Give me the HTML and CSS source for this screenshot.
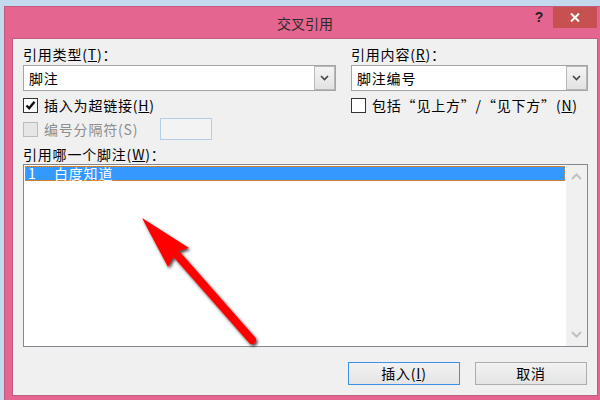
FILE: index.html
```html
<!doctype html>
<html lang="zh-CN">
<head>
    <meta charset="utf-8">
    <title>交叉引用</title>
    <link rel="stylesheet" href="styles.css">
</head>
<body>
    <div class="window">
        <div class="titlebar">
            <div></div>
            <div class="title">交叉引用</div>
            <div class="controls">
                <span class="help">?</span>
                <span class="close">
                    <svg width="10" height="9" viewBox="0 0 10 9"><path d="M1 0.5 L9 8.5 M9 0.5 L1 8.5" stroke="#fff" stroke-width="2"/></svg>
                </span>
            </div>
        </div>

        <div class="content">
            <div class="fields">
                <div class="label">引用类型(<u>T</u>)：</div>
                <div class="label">引用内容(<u>R</u>)：</div>

                <div class="select">
                    <div class="select-value">脚注</div>
                    <div class="select-btn">
                        <svg width="9" height="6" viewBox="0 0 9 6"><path d="M1 1 L4.5 4.5 L8 1" fill="none" stroke="#444" stroke-width="1.6"/></svg>
                    </div>
                </div>
                <div class="select">
                    <div class="select-value">脚注编号</div>
                    <div class="select-btn">
                        <svg width="9" height="6" viewBox="0 0 9 6"><path d="M1 1 L4.5 4.5 L8 1" fill="none" stroke="#444" stroke-width="1.6"/></svg>
                    </div>
                </div>

                <div class="check-row">
                    <span class="box">
                        <svg width="13" height="13" viewBox="0 0 13 13"><path d="M2.5 6.5 L5.2 9.3 L10.5 2.8" fill="none" stroke="#111" stroke-width="2.4"/></svg>
                    </span>
                    <span>插入为超链接(<u>H</u>)</span>
                </div>
                <div class="check-row">
                    <span class="box"></span>
                    <span>包括“见上方”/“见下方”(<u>N</u>)</span>
                </div>

                <div class="check-row disabled">
                    <span class="box"></span>
                    <span>编号分隔符(S)</span>
                    <span class="sep-input"></span>
                </div>
            </div>

            <div class="label list-label">引用哪一个脚注(<u>W</u>)：</div>

            <div class="listbox">
                <div class="items">
                    <div class="item selected"><span class="num">1</span>白度知道</div>
                </div>
                <div class="scrollbar">
                    <svg width="11" height="7" viewBox="0 0 11 7"><path d="M1 6 L5.5 1.5 L10 6" fill="none" stroke="#c2c2c2" stroke-width="2"/></svg>
                    <svg width="11" height="7" viewBox="0 0 11 7"><path d="M1 1 L5.5 5.5 L10 1" fill="none" stroke="#c2c2c2" stroke-width="2"/></svg>
                </div>
            </div>

            <div class="buttons">
                <div class="btn default">插入(<u>I</u>)</div>
                <div class="btn">取消</div>
            </div>
        </div>
    </div>

    <!-- red pointer drawn over the dialog -->
    <svg class="arrow" width="600" height="400" viewBox="0 0 600 400">
        <defs>
            <filter id="shadow" x="-20%" y="-20%" width="140%" height="140%">
                <feDropShadow dx="1.5" dy="2" stdDeviation="1.6" flood-color="#000" flood-opacity="0.75"/>
            </filter>
        </defs>
        <g filter="url(#shadow)">
            <line x1="172" y1="249" x2="252" y2="340" stroke="#ff0000" stroke-width="8" stroke-linecap="round"/>
            <polygon points="142,218 189,248 176,252 168,267" fill="#ff0000"/>
        </g>
    </svg>
</body>
</html>
```

FILE: styles.css
```css
* {
    box-sizing: border-box;
}
body {
    margin: 0;
    width: 600px;
    height: 400px;
    overflow: hidden;
    background-color: #c5d9ee;
    font-family: "Noto Sans CJK SC", "Liberation Sans", sans-serif;
    color: #000;
}
.window {
    margin: 6px 0 0 4px;
    width: 596px;
    height: 394px;
    padding: 0 0 0 7px;
    background: #e4658f;
    border: 1px solid #c25b82;
    border-right: none;
    border-bottom: none;
}

/* title bar */
.titlebar {
    height: 31px;
    display: grid;
    grid-template-columns: 69px 1fr 71px;
}
.title {
    text-align: center;
    font-size: 14px;
    line-height: 29px;
    padding-top: 2px;
    color: #2a2a2a;
}
.controls {
    display: flex;
    align-items: flex-start;
    gap: 4px;
}
.help {
    width: 20px;
    height: 21px;
    line-height: 21px;
    text-align: center;
    font-family: "Liberation Sans", sans-serif;
    font-weight: bold;
    font-size: 14px;
    color: #222;
}
.close {
    width: 44px;
    height: 21px;
    background: #c75050;
    display: flex;
    align-items: center;
    justify-content: center;
}

/* dialog body */
.content {
    width: 586px;
    height: 358px;
    border: 1px solid #c25b82;
    background: #f0f0f0;
    padding: 6px 9px 0 10px;
    font-size: 14px;
    letter-spacing: 0.8px;
}
.fields {
    display: grid;
    grid-template-columns: 313px 237px;
    column-gap: 15px;
}
.label {
    line-height: 18px;
}
.select {
    margin-top: 2px;
    height: 26px;
    display: flex;
    border: 1px solid #a4a4a4;
    background: #fff;
}
.select-value {
    flex: 1;
    padding-left: 5px;
    line-height: 24px;
}
.select-btn {
    width: 21px;
    border: 1px solid #b9b9b9;
    background: linear-gradient(#f4f4f4, #e2e2e2);
    display: flex;
    align-items: center;
    justify-content: center;
}
.check-row {
    margin-top: 3px;
    height: 22px;
    display: flex;
    align-items: center;
    gap: 6px;
}
.box {
    width: 15px;
    height: 15px;
    border: 1px solid #333;
    background: #fff;
    display: flex;
    align-items: center;
    justify-content: center;
}
.check-row.disabled {
    margin-top: 2px;
    color: #8d8d8d;
}
.check-row.disabled .box {
    border-color: #bcbcbc;
    background: #e6e6e6;
}
.sep-input {
    margin-left: 16px;
    width: 52px;
    height: 22px;
    border: 1px solid #b3cde6;
    background: #f3f3f3;
}
.list-label {
    margin-top: 5px;
}

/* list */
.listbox {
    margin-top: 1px;
    height: 183px;
    display: flex;
    border: 1px solid #828790;
    background: #fff;
}
.items {
    flex: 1;
    padding: 1px;
}
.item {
    height: 15px;
    padding-left: 2px;
    line-height: 13px;
    white-space: nowrap;
}
.item.selected {
    background: #3399ff;
    border: 1px dotted #d98a3a;
    color: #fff;
}
.num {
    display: inline-block;
    width: 26px;
}
.scrollbar {
    width: 21px;
    background: #f0f0f0;
    display: flex;
    flex-direction: column;
    justify-content: space-between;
    align-items: center;
    padding: 8px 0 8px;
}

/* buttons */
.buttons {
    margin-top: 15px;
    padding-right: 1px;
    display: flex;
    justify-content: flex-end;
    gap: 15px;
}
.btn {
    width: 112px;
    height: 23px;
    line-height: 21px;
    text-align: center;
    border: 1px solid #adadad;
    background: linear-gradient(#f2f2f2, #e4e4e4);
}
.btn.default {
    border-color: #3c91e6;
}

.arrow {
    position: absolute;
    left: 0;
    top: 0;
    pointer-events: none;
}
```
